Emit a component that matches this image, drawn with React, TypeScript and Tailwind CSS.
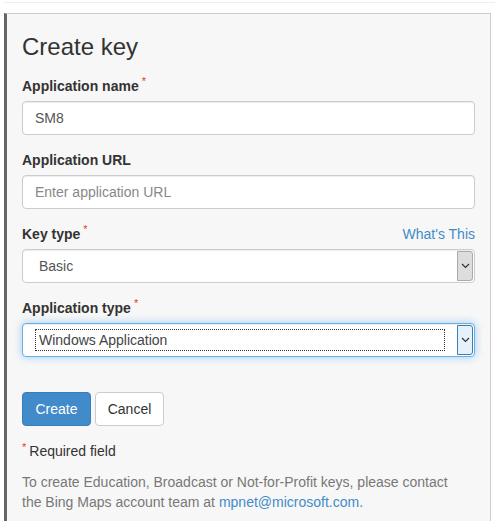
import React from "react";

const Star = () => (
  <span className="relative top-[-6px] ml-[3px] text-[11px] font-normal text-[#e33]">*</span>
);

const Chevron = () => (
  <svg width="9" height="6" viewBox="0 0 9 6" fill="none">
    <path d="M1 1 L4.5 4.5 L8 1" stroke="#333" strokeWidth="1.2" />
  </svg>
);

export default function App() {
  return (
    <div className="pt-[2px] pl-[4px] font-['Liberation_Sans',Arial,sans-serif] text-[14px] leading-[20px] text-[#333]">
      <div className="h-px bg-[#eee]" />
      <div className="mt-[10px] w-[487px] border border-[#ccc] border-l-[3px] border-l-[#666] border-b-0 bg-[#f7f7f7] px-[15px] pt-[20px] pb-[20px]">
        <h3 className="text-[24px] leading-[26px] font-normal text-[#333]">Create key</h3>

        <div className="mt-[16px]">
          <div className="h-[20px] font-bold">
            Application name
            <Star />
          </div>
          <div className="mt-[5px] flex h-[34px] items-center rounded-[4px] border border-[#ccc] bg-white px-[12px] text-[#555] shadow-[inset_0_1px_1px_rgba(0,0,0,0.075)]">
            SM8
          </div>
        </div>

        <div className="mt-[15px]">
          <div className="h-[20px] font-bold">Application URL</div>
          <div className="mt-[5px] flex h-[34px] items-center rounded-[4px] border border-[#ccc] bg-white px-[12px] text-[#888] shadow-[inset_0_1px_1px_rgba(0,0,0,0.075)]">
            Enter application URL
          </div>
        </div>

        <div className="mt-[15px]">
          <div className="flex h-[20px] items-center justify-between">
            <span className="font-bold">
              Key type
              <Star />
            </span>
            <span className="text-[#428bca]">What's This</span>
          </div>
          <div className="mt-[5px] flex h-[34px] items-stretch rounded-[4px] border border-[#ccc] bg-white text-[#555] shadow-[inset_0_1px_1px_rgba(0,0,0,0.075)]">
            <div className="flex flex-1 items-center pl-[16px]">Basic</div>
            <div className="my-[1px] mr-[1px] flex w-[16px] items-center justify-center rounded-r-[3px] border border-[#aaa] bg-[#ddd]">
              <Chevron />
            </div>
          </div>
        </div>

        <div className="mt-[15px]">
          <div className="h-[20px] font-bold">
            Application type
            <Star />
          </div>
          <div className="mt-[5px] flex h-[34px] items-stretch rounded-[4px] border border-[#66afe9] bg-white text-[#555] shadow-[inset_0_1px_1px_rgba(0,0,0,0.075),0_0_8px_rgba(102,175,233,0.6)]">
            <div className="flex flex-1 items-center pl-[12px] pr-[12px]">
              <div className="flex h-[22px] w-full items-center border border-dotted border-[#333] pl-[3px] text-[#444]">
                Windows Application
              </div>
            </div>
            <div className="my-[1px] mr-[1px] flex w-[16px] items-center justify-center rounded-r-[3px] border border-[#3c7fb1] bg-[#e5f1fb]">
              <Chevron />
            </div>
          </div>
        </div>

        <div className="mt-[35px] flex gap-[4px]">
          <button className="h-[34px] w-[69px] rounded-[4px] border border-[#357ebd] bg-[#428bca] text-[14px] text-white">
            Create
          </button>
          <button className="h-[34px] w-[69px] rounded-[4px] border border-[#ccc] bg-white text-[14px] text-[#333]">
            Cancel
          </button>
        </div>

        <div className="mt-[15px]">
          <span className="relative top-[-5px] mr-[3px] text-[11px] text-[#e33]">*</span>
          Required field
        </div>

        <p className="mt-[10px] text-[#777]">
          To create Education, Broadcast or Not-for-Profit keys, please contact
          <br />
          the Bing Maps account team at <span className="text-[#428bca]">mpnet@microsoft.com</span>.
        </p>
      </div>
    </div>
  );
}
